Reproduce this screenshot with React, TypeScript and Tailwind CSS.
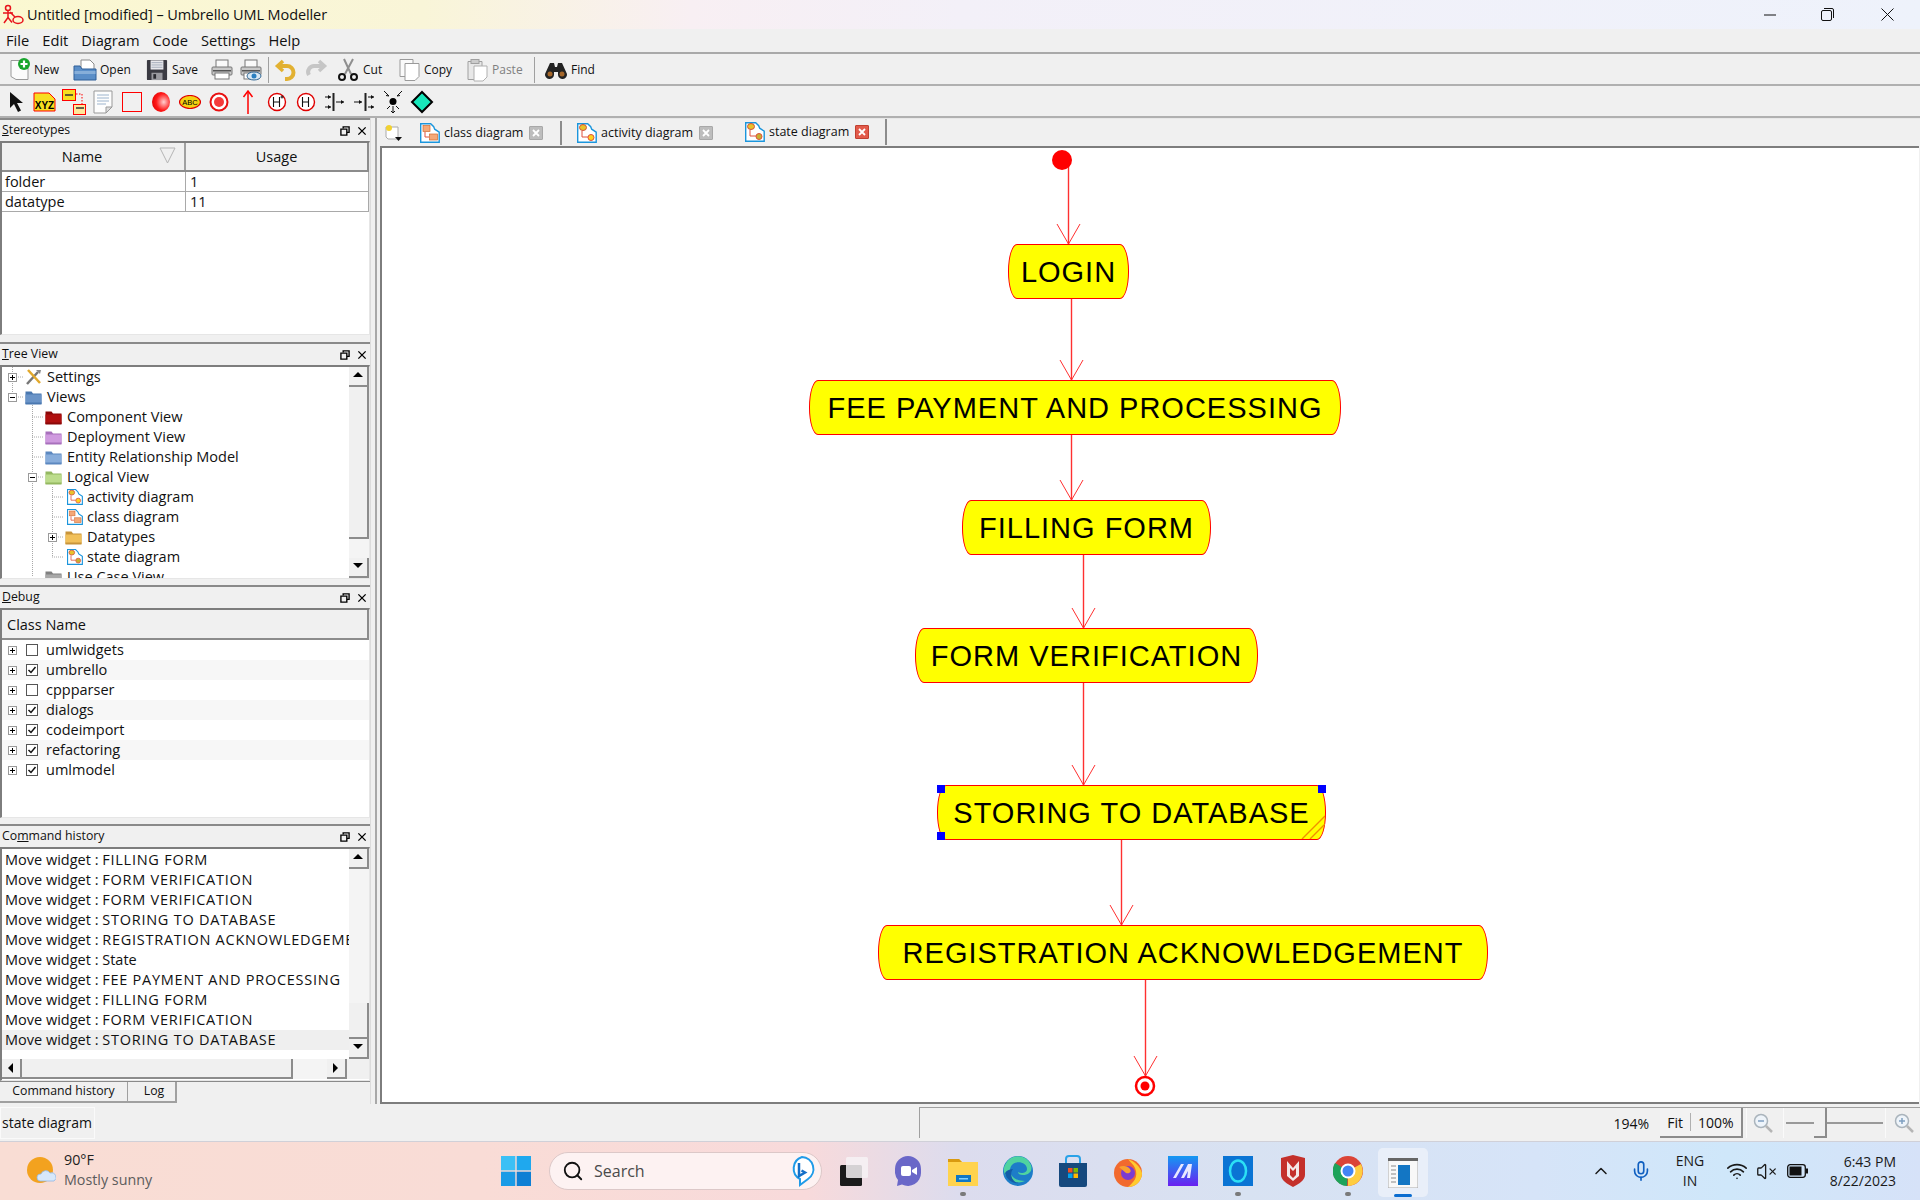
import type { ReactNode } from "react";
import { ChevronUp, Mic, Search, VolumeX, Wifi } from "lucide-react";

const menu = ["File", "Edit", "Diagram", "Code", "Settings", "Help"];

const historyRows = [
  "FILLING FORM",
  "FORM VERIFICATION",
  "FORM VERIFICATION",
  "STORING TO DATABASE",
  "REGISTRATION ACKNOWLEDGEMENT",
  "State",
  "FEE PAYMENT AND PROCESSING",
  "FILLING FORM",
  "FORM VERIFICATION",
  "STORING TO DATABASE",
];

const debugRows = [
  { name: "umlwidgets", on: false },
  { name: "umbrello", on: true },
  { name: "cppparser", on: false },
  { name: "dialogs", on: true },
  { name: "codeimport", on: true },
  { name: "refactoring", on: true },
  { name: "umlmodel", on: true },
];

function Folder({ color, dark }: { color: string; dark: string }) {
  return (
    <svg width="17" height="16" viewBox="0 0 17 16">
      <path d="M0.5 2.5h6l1.5 2h8.500v10h-16z" fill={dark} />
      <rect x="0.5" y="5.500" width="16" height="9.500" fill={color} />
      <rect x="0.5" y="13.500" width="16" height="2" fill={dark} />
    </svg>
  );
}

function DiagramIcon({ variant = "state" }: { variant?: "class" | "activity" | "state" }) {
  return (
    <svg width="20" height="20" viewBox="0 0 20 20">
      <path d="M0.700 0.700h10l3 3 1 2.500 4.500 3v10h-18.500z" fill="#fff" stroke="#1b95dc" strokeWidth="1.400" />
      {variant === "class" ? (
        <>
          <rect x="3" y="2.500" width="7" height="6" fill="#f4a878" stroke="#d06a30" strokeWidth="0.700" />
          <rect x="9.500" y="11" width="8" height="6" fill="#f4a878" stroke="#d06a30" strokeWidth="0.700" />
          <path d="M5 9v5h4" fill="none" stroke="#e0503c" />
        </>
      ) : (
        <>
          <ellipse cx="6" cy="4.500" rx="3.500" ry="3" fill="#e8c22a" stroke="#d0503c" />
          <circle cx="14" cy="14.500" r="3" fill={variant === "activity" ? "#ffd21f" : "#c8b030"} stroke="#e0503c" />
          <path d="M5 8v6h6" fill="none" stroke="#e0503c" />
        </>
      )}
    </svg>
  );
}

function Expander({ open }: { open?: boolean }) {
  return (
    <span className="relative block h-[9px] w-[9px] border border-[#9a9a9a] bg-white">
      <span className="absolute left-[1px] top-[3px] h-px w-[5px] bg-black" />
      {open ? null : <span className="absolute left-[3px] top-[1px] h-[5px] w-px bg-black" />}
    </span>
  );
}

function TreeRow({ indent, expander, icon, label }: { indent: string; expander?: "open" | "closed"; icon: ReactNode; label: string }) {
  return (
    <div className={`flex h-5 shrink-0 items-center ${indent}`}>
      <span className="flex w-[22px] shrink-0 items-center pl-[5px]">
        {expander ? <Expander open={expander === "open"} /> : null}
      </span>
      <span className="flex w-[22px] shrink-0 items-center">{icon}</span>
      <span className="whitespace-nowrap">{label}</span>
    </div>
  );
}

function Arrow({ dir }: { dir: "up" | "down" | "left" | "right" }) {
  const points = { up: "0,6 5,1 10,6", down: "0,1 5,6 10,1", left: "7,0 7,10 2,5", right: "2,0 2,10 7,5" }[dir];
  return (
    <svg width="10" height="10" viewBox="0 0 10 10" className="block">
      <polygon points={points} fill="#000" />
    </svg>
  );
}

function ScrollButton({ dir }: { dir: "up" | "down" | "left" | "right" }) {
  return (
    <div className="flex h-[20px] w-[20px] shrink-0 items-center justify-center border-b-2 border-r-2 border-[#8c8c8c] bg-[#f0f0f0]">
      <Arrow dir={dir} />
    </div>
  );
}

function Dock({ title, h, pad, children }: { title: ReactNode; h: string; pad: string; children: ReactNode }) {
  return (
    <section className={`flex shrink-0 flex-col border-t-2 border-[#8a8a8a] ${h} ${pad}`}>
      <div className="flex h-[21px] shrink-0 items-center justify-between pl-[2px] pr-[3px] text-[12.300px]">
        <span>{title}</span>
        <span className="flex items-center gap-[7px]">
          <svg width="10" height="10" viewBox="0 0 11 11">
            <path d="M3.500 2.500V1h6.500v6H7.500M1 3.500h6.500v6.500H1z" fill="none" stroke="#000" strokeWidth="1.500" />
          </svg>
          <svg width="10" height="10" viewBox="0 0 11 11">
            <path d="M1.500 1.500l8 8M9.500 1.500l-8 8" stroke="#000" strokeWidth="1.500" />
          </svg>
        </span>
      </div>
      {children}
    </section>
  );
}

const frame = "border-l-2 border-t-2 border-b border-r border-l-[#7d7d7d] border-t-[#7d7d7d] border-b-[#e6e6e6] border-r-[#e6e6e6] bg-white";

function Tool({ w, icon, label, muted }: { w: string; icon: ReactNode; label?: string; muted?: boolean }) {
  return (
    <div className={`flex shrink-0 items-center gap-[3px] ${w}`}>
      <span className="flex h-6 w-[24px] shrink-0 items-center justify-center">{icon}</span>
      {label ? <span className={`text-[12px] ${muted ? "text-[#808080]" : ""}`}>{label}</span> : null}
    </div>
  );
}

function PageIcon({ muted }: { muted?: boolean }) {
  return <path d="M4 2.500h12l5 5v14h-12l-5-3z" fill="#fbfbfb" stroke={muted ? "#b5b5b5" : "#9a9a9a"} />;
}

function PrinterIcon() {
  return (
    <>
      <rect x="6" y="2" width="12" height="8" fill="#fafafa" stroke="#777" />
      <rect x="2" y="9" width="20" height="8" rx="1" fill="#c9c9c9" stroke="#777" />
      <rect x="5" y="15" width="14" height="6" fill="#fff" stroke="#777" />
      <rect x="3" y="12" width="18" height="1.500" fill="#555" />
    </>
  );
}

const tools1: { w: string; label?: string; icon: ReactNode; muted?: boolean; sep?: boolean }[] = [
  {
    w: "w-[66px]",
    label: "New",
    icon: (
      <svg width="24" height="24" viewBox="0 0 24 24">
        <PageIcon />
        <circle cx="17" cy="6" r="6" fill="#18a52c" />
        <path d="M17 2.500v7M13.500 6h7" stroke="#fff" strokeWidth="2.200" />
      </svg>
    ),
  },
  {
    w: "w-[72px]",
    label: "Open",
    icon: (
      <svg width="24" height="24" viewBox="0 0 24 24">
        <path d="M8 2h9l4 4v8H8z" fill="#fff" stroke="#8a8a8a" />
        <path d="M1 8h6l2 3h14v11H1z" fill="#5a8ec8" stroke="#2f5f98" />
        <rect x="1.500" y="13" width="21" height="3" fill="#86aed9" />
      </svg>
    ),
  },
  {
    w: "w-[65px]",
    label: "Save",
    icon: (
      <svg width="22" height="24" viewBox="0 0 24 24">
        <rect x="1" y="1" width="22" height="22" rx="1" fill="#3a3a42" />
        <rect x="5" y="1.500" width="14" height="10" fill="#e8e8ec" />
        <path d="M6 4h12M6 6.500h12M6 9h12" stroke="#a0a8b8" />
        <rect x="6" y="15" width="12" height="8" fill="#9a9aa0" />
        <rect x="8" y="16.500" width="3" height="5" fill="#2a2a30" />
      </svg>
    ),
  },
  { w: "w-[29px]", icon: <svg width="24" height="24" viewBox="0 0 24 24"><PrinterIcon /></svg> },
  {
    w: "w-[29px]",
    icon: (
      <svg width="24" height="24" viewBox="0 0 24 24">
        <PrinterIcon />
        <ellipse cx="15" cy="18" rx="7" ry="4" fill="#d8e8f4" stroke="#356a96" />
        <circle cx="15" cy="18" r="2.500" fill="#2a7fc0" />
      </svg>
    ),
  },
  { w: "w-[6px]", icon: null, sep: true },
  {
    w: "w-[30px]",
    icon: (
      <svg width="24" height="24" viewBox="0 0 24 24">
        <path d="M9 3L3.500 8 9 13" fill="none" stroke="#e2b132" strokeWidth="3.500" />
        <path d="M4 8h9a6 6 0 0 1 0 13h-2" fill="none" stroke="#e2b132" strokeWidth="4" />
      </svg>
    ),
  },
  {
    w: "w-[32px]",
    icon: (
      <svg width="24" height="24" viewBox="0 0 24 24">
        <path d="M15 3l5.500 5L15 13" fill="none" stroke="#c6c6c6" strokeWidth="3.500" />
        <path d="M20 8h-9a6 6 0 0 0-6 9" fill="none" stroke="#c6c6c6" strokeWidth="4" />
      </svg>
    ),
  },
  {
    w: "w-[61px]",
    label: "Cut",
    icon: (
      <svg width="24" height="24" viewBox="0 0 24 24">
        <path d="M8 1l7 15M17 1l-8 15" stroke="#8f8f8f" strokeWidth="2" />
        <circle cx="6" cy="19" r="3" fill="none" stroke="#111" strokeWidth="2" />
        <circle cx="18" cy="19" r="3" fill="none" stroke="#111" strokeWidth="2" />
      </svg>
    ),
  },
  {
    w: "w-[68px]",
    label: "Copy",
    icon: (
      <svg width="24" height="24" viewBox="0 0 24 24">
        <path d="M3 1.500h13v17H3z" fill="#fafafa" stroke="#9a9a9a" />
        <path d="M8 5.500h14v13l-4 4H8z" fill="#fff" stroke="#9a9a9a" />
      </svg>
    ),
  },
  {
    w: "w-[69px]",
    label: "Paste",
    muted: true,
    icon: (
      <svg width="24" height="24" viewBox="0 0 24 24">
        <path d="M3 3.500h14v18H3z" fill="#e8e8e8" stroke="#a0a0a0" />
        <rect x="6" y="1.500" width="8" height="4" fill="#ccc" stroke="#a0a0a0" />
        <path d="M9 8h13v11l-4 4H9z" fill="#fff" stroke="#b0b0b0" />
      </svg>
    ),
  },
  { w: "w-[10px]", icon: null, sep: true },
  {
    w: "w-[60px]",
    label: "Find",
    icon: (
      <svg width="24" height="24" viewBox="0 0 24 24">
        <path d="M6 5h4l1 4h2l1-4h4l5 11a4.500 4.500 0 1 1-9 1v-3h-4v3a4.500 4.500 0 1 1-9-1z" fill="#232323" />
        <circle cx="6" cy="16" r="2.500" fill="#a5672a" />
        <circle cx="18" cy="16" r="2.500" fill="#a5672a" />
      </svg>
    ),
  },
];

function Ball() {
  return (
    <svg width="22" height="24" viewBox="0 0 22 24">
      <defs>
        <radialGradient id="ball" cx="0.650" cy="0.500" r="0.700">
          <stop offset="0" stopColor="#ffd0d0" />
          <stop offset="0.600" stopColor="#ff1a1a" />
          <stop offset="1" stopColor="#e00000" />
        </radialGradient>
      </defs>
      <ellipse cx="11" cy="12" rx="9" ry="10" fill="url(#ball)" />
    </svg>
  );
}

function HistoryIcon({ deep }: { deep?: boolean }) {
  return (
    <svg width="20" height="20" viewBox="0 0 20 20">
      <circle cx="10" cy="10" r="8.500" fill="#fff" stroke="#e00000" strokeWidth="1.400" />
      <path d="M6.500 5v10M12.500 5v10M6.500 10h6" stroke="#111" strokeWidth="1.100" fill="none" />
      {deep ? <path d="M15 3.500v3M13.500 5h3" stroke="#111" strokeWidth="1" /> : null}
    </svg>
  );
}

const tools2: ReactNode[] = [
  <svg key="a" width="16" height="22" viewBox="0 0 16 22"><path d="M2 1v16l4-4 4 8 3-1.500-4-7.500h6z" fill="#111" /></svg>,
  <svg key="b" width="23" height="22" viewBox="0 0 23 22"><path d="M1 2h15l6 6v12H1z" fill="#f7df20" stroke="#f00" /><text x="11.500" y="18" fontSize="10" fontWeight="700" textAnchor="middle" fontFamily="Liberation Sans">XYZ</text></svg>,
  <svg key="c" width="24" height="26" viewBox="0 0 24 26">
    <rect x="0.500" y="0.500" width="13" height="11" fill="#f7df20" stroke="#f00" />
    <rect x="11.500" y="15.500" width="12" height="10" fill="#ffe79a" stroke="#f00" />
    <path d="M14 5h6v10" fill="none" stroke="#f00" strokeDasharray="1.500 1.500" />
    <path d="M3 6h8M14 19h8" stroke="#333" strokeWidth="1.500" />
  </svg>,
  <svg key="d" width="20" height="24" viewBox="0 0 20 24"><path d="M1 1h18v16l-6 6H1z" fill="#fdfdfd" stroke="#999" /><path d="M4 5h12M4 8h12M4 11h12M4 14h9" stroke="#9db4cd" /><path d="M13 23v-6h6z" fill="#ddd" stroke="#999" /></svg>,
  <div key="e" className="h-[20px] w-[20px] border border-[#ff0000]" />,
  <Ball key="f" />,
  <svg key="g" width="22" height="14" viewBox="0 0 22 14"><ellipse cx="11" cy="7" rx="10.500" ry="6.500" fill="#f5d210" stroke="#e00000" strokeWidth="1.200" /><text x="11" y="10" fontSize="7.500" textAnchor="middle" fontFamily="Liberation Sans">ABC</text></svg>,
  <svg key="h" width="20" height="20" viewBox="0 0 20 20"><circle cx="10" cy="10" r="8.500" fill="#fff" stroke="#e81010" strokeWidth="2" /><circle cx="10" cy="10" r="5" fill="#f53a3a" /></svg>,
  <svg key="i" width="12" height="24" viewBox="0 0 12 24"><path d="M6 1v23" stroke="#f00" strokeWidth="1.500" /><path d="M1.500 7L6 1l4.500 6" fill="none" stroke="#f00" strokeWidth="1.500" /></svg>,
  <HistoryIcon key="j" deep />,
  <HistoryIcon key="k" />,
  <svg key="l" width="22" height="20" viewBox="0 0 22 20"><path d="M9.500 1v18" stroke="#222" strokeWidth="2" /><path d="M1 5h6M1 15h6M12 10h8" stroke="#111" /><path d="M4 3l3 2-3 2M4 13l3 2-3 2M17 8l3 2-3 2" fill="#111" /></svg>,
  <svg key="m" width="22" height="20" viewBox="0 0 22 20"><path d="M12.500 1v18" stroke="#222" strokeWidth="2" /><path d="M1 10h8M15 5h6M15 15h6" stroke="#111" /><path d="M6 8l3 2-3 2M18 3l3 2-3 2M18 13l3 2-3 2" fill="#111" /></svg>,
  <svg key="n" width="20" height="24" viewBox="0 0 20 24"><circle cx="10" cy="11.500" r="3.500" fill="#000" /><path d="M1 1l5 5M19 1l-5 5M4 19l3-3M16 19l-3-3M10 16v7" stroke="#111" /><path d="M6 6l-3-.5M14 6l3-.5M8 21l2 2 2-2" stroke="#111" fill="none" /></svg>,
  <svg key="o" width="24" height="24" viewBox="0 0 24 24"><path d="M12 2l10 10-10 10L2 12z" fill="#17e8bb" stroke="#000" strokeWidth="2" /></svg>,
];

const nodes = [
  { label: "LOGIN", cls: "left-[626px] top-[96px] w-[121px]" },
  { label: "FEE PAYMENT AND PROCESSING", cls: "left-[427px] top-[232px] w-[532px]" },
  { label: "FILLING FORM", cls: "left-[580px] top-[352px] w-[249px]" },
  { label: "FORM VERIFICATION", cls: "left-[533px] top-[480px] w-[343px]" },
  { label: "STORING TO DATABASE", cls: "left-[555px] top-[637px] w-[389px]", selected: true },
  { label: "REGISTRATION ACKNOWLEDGEMENT", cls: "left-[496px] top-[777px] w-[610px]" },
];

const edges = [
  [1068, 165, 244],
  [1071, 299, 380],
  [1071, 435, 500],
  [1083, 555, 628],
  [1083, 683, 785],
  [1121, 840, 925],
  [1145, 980, 1076],
];

function Canvas() {
  return (
    <div className="relative min-h-0 flex-1 overflow-hidden bg-white">
      <svg className="absolute left-0 top-0 h-[954px] w-[1536px]" viewBox="382 148 1536 954">
        {edges.map(([x, y1, y2]) => (
          <g key={y1} stroke="#ff3030" strokeWidth="1" fill="none">
            <path d={`M${x + 0.5} ${y1}V${y2}`} strokeWidth="1.400" />
            <path d={`M${x - 11} ${y2 - 20}L${x + 0.5} ${y2}L${x + 12} ${y2 - 20}`} />
          </g>
        ))}
        <circle cx="1062" cy="160" r="10" fill="#ff0000" />
        <circle cx="1145" cy="1086" r="9" fill="#fff" stroke="#ff0000" strokeWidth="2.500" />
        <circle cx="1145" cy="1086" r="4.500" fill="#ff0000" />
      </svg>
      {nodes.map((n) => (
        <div
          key={n.label}
          className={`absolute flex h-[55px] items-center justify-center rounded-[9px/27px] border border-[#ff0000] bg-[#ffff00] pt-[2px] font-['Liberation_Sans',sans-serif] text-[29px] tracking-[1px] text-black ${n.cls}`}
        >
          <span className="whitespace-nowrap">{n.label}</span>
          {n.selected ? (
            <>
              <span className="absolute -left-px -top-px h-2 w-2 bg-[#0000ff]" />
              <span className="absolute -right-px -top-px h-2 w-2 bg-[#0000ff]" />
              <span className="absolute -bottom-px -left-px h-2 w-2 bg-[#0000ff]" />
              <svg className="absolute bottom-0 right-0" width="24" height="24" viewBox="0 0 24 24">
                <path d="M1 24L24 1M9 24L24 9" stroke="#f09000" strokeWidth="1.400" />
              </svg>
            </>
          ) : null}
        </div>
      ))}
    </div>
  );
}

function Tab({ w, pad, variant, label, active }: { w: string; pad: string; variant: "class" | "activity" | "state"; label: string; active?: boolean }) {
  return (
    <div
      className={`flex shrink-0 items-center gap-[4px] text-[12.500px] ${w} ${pad} ${
        active ? "h-[26px] self-start border-r-2 border-[#8c8c8c] bg-[#f0f0f0]" : "mb-[1px] h-[24px] self-end"
      }`}
    >
      <DiagramIcon variant={variant} />
      <span className="whitespace-nowrap">{label}</span>
      <span
        className={`ml-[2px] flex h-[14px] w-[14px] items-center justify-center rounded-[1px] ${
          active ? "border border-[#c04030] bg-[#e25a4a]" : "border border-[#a8a8a8] bg-[#bdbdbd]"
        }`}
      >
        <svg width="8" height="8" viewBox="0 0 8 8">
          <path d="M1 1l6 6M7 1L1 7" stroke="#fff" strokeWidth="1.800" />
        </svg>
      </span>
    </div>
  );
}

function TaskIcon({ children, w = "w-[55px]", dot }: { children: ReactNode; w?: string; dot?: boolean }) {
  return (
    <div className={`relative flex h-full shrink-0 items-center justify-center ${w}`}>
      {children}
      {dot ? <span className="absolute bottom-[4px] h-[4px] w-[6px] rounded-full bg-[#7a7a7a]" /> : null}
    </div>
  );
}

function Taskbar() {
  return (
    <footer className="flex h-[59px] shrink-0 items-center border-t border-[#d0d0d8] bg-[linear-gradient(90deg,#f9ddd4_0%,#f9dcd6_25%,#f8dadb_42%,#dcdcee_50%,#d8e2f2_65%,#d6e4f8_80%,#cfe7fa_90%,#d6e2f8_100%)]">
      <div className="flex w-[490px] shrink-0 items-center pb-[2px] pl-[27px]">
        <svg width="29" height="27" viewBox="0 0 29 27">
          <circle cx="13" cy="13" r="13" fill="#f3a21f" />
          <path d="M13 24a3.500 3.500 0 0 1 1-7 5 5 0 0 1 9-1 4.500 4.500 0 0 1 4 8z" fill="#d7e8fb" stroke="#8fb7e6" strokeWidth="0.800" />
        </svg>
        <div className="ml-[8px] text-[14.300px] leading-[20px]">
          <div className="text-[#222]">90°F</div>
          <div className="text-[#5c5c5c]">Mostly sunny</div>
        </div>
      </div>
      <div className="flex w-[59px] justify-center pr-[7px]">
        <svg width="30" height="30" viewBox="0 0 30 30">
          <rect x="0" y="0" width="14.300" height="14.300" fill="#3cc0f5" />
          <rect x="15.700" y="0" width="14.300" height="14.300" fill="#1fa8ee" />
          <rect x="0" y="15.700" width="14.300" height="14.300" fill="#1a9be6" />
          <rect x="15.700" y="15.700" width="14.300" height="14.300" fill="#0e7fd4" />
        </svg>
      </div>
      <div className="flex h-[38px] w-[273px] shrink-0 items-center rounded-full border border-[#dcc8c8] bg-[#fdf2f2] pl-[12px] pr-[5px] text-[16px] text-[#4a4a4a]">
        <Search size={22} strokeWidth={2} className="text-[#111]" />
        <span className="ml-[10px] flex-1">Search</span>
        <svg width="28" height="32" viewBox="0 0 28 32">
          <path d="M14 2a12 12 0 0 1 6 22l-8 6v-6A12 12 0 0 1 14 2z" fill="#fff" stroke="#1f9be8" strokeWidth="2" />
          <path d="M11 8v13l6-3.500-3.500-2" fill="none" stroke="#1470c8" strokeWidth="2.500" />
        </svg>
      </div>
      <div className="ml-[3px] flex h-full items-stretch">
        <TaskIcon>
          <svg width="32" height="30" viewBox="0 0 32 30">
            <rect x="3" y="9" width="22" height="21" rx="1.500" fill="#1b1b1b" />
            <rect x="9" y="1" width="22" height="21" rx="1.500" fill="#f6f2f4" fillOpacity="0.850" />
          </svg>
        </TaskIcon>
        <TaskIcon>
          <svg width="30" height="32" viewBox="0 0 30 32">
            <path d="M15 1a13 13 0 0 1 13 13v4a13 13 0 0 1-19 11.500L4 31l1-6a13 13 0 0 1-3-7v-4A13 13 0 0 1 15 1z" fill="#6a67c8" />
            <rect x="8" y="11" width="10" height="10" rx="2" fill="#fff" />
            <path d="M19 15l5-3v8l-5-3z" fill="#fff" />
          </svg>
        </TaskIcon>
        <TaskIcon dot>
          <svg width="30" height="30" viewBox="0 0 30 30">
            <path d="M0 3h11l3 3h16v24H0z" fill="#ffd34e" />
            <path d="M0 3h11l3 3H0z" fill="#d99a10" />
            <rect x="8" y="19" width="15" height="7" fill="#0f77c4" />
            <rect x="11" y="22" width="9" height="1.500" fill="#7fd0ff" />
          </svg>
        </TaskIcon>
        <TaskIcon>
          <svg width="30" height="30" viewBox="0 0 30 30">
            <circle cx="15" cy="15" r="15" fill="#1d7dc8" />
            <path d="M2 9a14 14 0 0 1 26 0c2 6-2 10-8 10-3 0-5-1-5-3 3 2 9 1 9-3 0-6-9-9-14-5-4 3-4 9 0 13 3 3 8 4 12 4a15 15 0 0 1-21-9c-.500-3 0-5 1-7z" fill="#4fd3a0" />
            <path d="M10 13c-4 5-1 13 6 14-7 1-13-4-14-10 2-3 5-4 8-4z" fill="#135ca8" />
          </svg>
        </TaskIcon>
        <TaskIcon>
          <svg width="30" height="32" viewBox="0 0 30 32">
            <path d="M8 9V4a3 3 0 0 1 3-3h8a3 3 0 0 1 3 3v5" fill="none" stroke="#2aa2e8" strokeWidth="2" />
            <path d="M1 8h28v22a2 2 0 0 1-2 2H3a2 2 0 0 1-2-2z" fill="#16497e" />
            <rect x="10" y="13" width="4.500" height="4.500" fill="#f25022" />
            <rect x="15.500" y="13" width="4.500" height="4.500" fill="#7fba00" />
            <rect x="10" y="18.500" width="4.500" height="4.500" fill="#00a4ef" />
            <rect x="15.500" y="18.500" width="4.500" height="4.500" fill="#ffb900" />
          </svg>
        </TaskIcon>
        <TaskIcon>
          <svg width="30" height="32" viewBox="0 0 30 32">
            <circle cx="15" cy="18" r="14" fill="#f26a2e" />
            <path d="M15 4c6 2 12 7 14 14a14 14 0 0 1-14 14C20 28 26 22 22 13c-1-3-5-6-7-9z" fill="#ffcb2e" />
            <circle cx="15" cy="18" r="7" fill="#7c3bd0" />
            <path d="M6 12c4-2 9-1 11 2s-1 5-4 4" fill="#f9a12e" />
          </svg>
        </TaskIcon>
        <TaskIcon>
          <svg width="30" height="30" viewBox="0 0 30 30">
            <defs>
              <linearGradient id="mm" x1="0" y1="0" x2="0" y2="1">
                <stop offset="0" stopColor="#1499f2" />
                <stop offset="1" stopColor="#6a20f0" />
              </linearGradient>
            </defs>
            <rect width="30" height="30" fill="url(#mm)" />
            <path d="M5 22L13 8h3L8 22zM13 22l7-14h4l-2 14h-3l1-7-4 7z" fill="#e8e8ff" />
          </svg>
        </TaskIcon>
        <TaskIcon dot>
          <svg width="30" height="30" viewBox="0 0 30 30">
            <rect width="30" height="30" fill="#0a74d4" />
            <ellipse cx="15" cy="15" rx="8" ry="10.500" fill="none" stroke="#2ce0f5" strokeWidth="2.500" />
          </svg>
        </TaskIcon>
        <TaskIcon>
          <svg width="26" height="32" viewBox="0 0 26 32">
            <path d="M1 3l12-3 12 3v17c0 5-6 9-12 12C7 29 1 25 1 20z" fill="#c4302b" />
            <path d="M7 6l6 7 6-7v15l-6 5-6-5z" fill="#f4e8e8" />
            <path d="M10 13l3 3 3-3v7l-3 3-3-3z" fill="#c4302b" />
          </svg>
        </TaskIcon>
        <TaskIcon dot>
          <svg width="30" height="30" viewBox="0 0 30 30">
            <circle cx="15" cy="15" r="15" fill="#db4437" />
            <path d="M15 15L28 8a15 15 0 0 1-13 22z" fill="#ffcd40" />
            <path d="M15 15l-1 15A15 15 0 0 1 2 7z" fill="#1da35a" />
            <circle cx="15" cy="15" r="7.500" fill="#fff" />
            <circle cx="15" cy="15" r="5.500" fill="#4285f4" />
          </svg>
        </TaskIcon>
        <div className="relative mb-[3px] ml-[3px] mt-[6px] flex w-[50px] shrink-0 items-center justify-center self-stretch rounded-[5px] bg-[#e9eff9]">
          <svg width="30" height="30" viewBox="0 0 30 30">
            <rect width="30" height="30" fill="#f8f8f8" stroke="#aaa" />
            <rect width="30" height="3" fill="#666" />
            <path d="M3 8h5M3 12h5M3 16h5M3 20h5M3 24h5" stroke="#888" />
            <rect x="10" y="7" width="12" height="20" fill="#1376c4" />
          </svg>
          <span className="absolute bottom-0 h-[3px] w-[18px] rounded-full bg-[#0a6cd0]" />
        </div>
      </div>
      <div className="ml-auto flex items-center pr-[24px] text-[#1a1a1a]">
        <ChevronUp size={20} strokeWidth={1.800} />
        <Mic size={22} strokeWidth={1.800} className="ml-[19px] text-[#0f5fc0]" />
        <div className="ml-[16px] w-[44px] text-center text-[14px] leading-[20px]">
          ENG
          <br />
          IN
        </div>
        <Wifi size={22} strokeWidth={1.800} className="ml-[14px]" />
        <VolumeX size={21} strokeWidth={1.500} className="ml-[8px]" />
        <svg className="ml-[10px]" width="21" height="14" viewBox="0 0 21 14">
          <rect x="0.700" y="0.700" width="17.600" height="12.600" rx="2.500" fill="none" stroke="#111" strokeWidth="1.300" />
          <rect x="2.500" y="2.500" width="12" height="9" fill="#111" />
          <rect x="19" y="4.500" width="2" height="5" fill="#111" />
        </svg>
        <div className="ml-[4px] w-[84px] text-right text-[14px] leading-[19px]">
          <div>6:43 PM</div>
          <div>8/22/2023</div>
        </div>
      </div>
    </footer>
  );
}

export default function App() {
  return (
    <div className="flex h-[1200px] w-[1920px] flex-col overflow-hidden bg-[#f0f0f0] font-['Open_Sans',sans-serif] text-[14.500px] text-[#111]">
      <header className="flex h-[29px] shrink-0 items-center bg-[linear-gradient(90deg,#fbf8d1_0%,#f9f5d8_22%,#f8eff3_36%,#f3f0f8_50%,#eef2fb_100%)]">
        <svg className="ml-[2px] shrink-0" width="22" height="22" viewBox="0 0 22 22">
          <g fill="none" stroke="#e8141c" strokeWidth="1.500">
            <circle cx="6" cy="4" r="2.500" />
            <path d="M6 6.500v7M1 9h10M6 13.500L2 19M6 13.500l4 5" />
            <ellipse cx="16" cy="16" rx="5" ry="3.500" />
            <path d="M8 8l5 5" />
          </g>
        </svg>
        <span className="ml-[3px] text-[14.500px] tracking-[-0.1px]">Untitled [modified] – Umbrello UML Modeller</span>
        <div className="ml-auto flex items-center">
          <svg className="mr-[45px]" width="12" height="12" viewBox="0 0 12 12"><path d="M0 6h12" stroke="#111" /></svg>
          <svg className="mr-[47px]" width="13" height="13" viewBox="0 0 13 13"><rect x="0.500" y="2.500" width="10" height="10" rx="1.500" fill="none" stroke="#111" /><path d="M3 .5h8a1.500 1.500 0 0 1 1.500 1.500v8" fill="none" stroke="#111" /></svg>
          <svg className="mr-[26px]" width="13" height="13" viewBox="0 0 13 13"><path d="M.5.5l12 12M12.500.5l-12 12" stroke="#111" /></svg>
        </div>
      </header>
      <nav className="flex h-[25px] shrink-0 items-center gap-[13px] border-b-2 border-[#a9a9a9] pl-[6px] text-[14.700px]">
        {menu.map((m) => (
          <span key={m}>{m}</span>
        ))}
      </nav>
      <div className="flex h-[32px] shrink-0 items-center border-b-2 border-[#b0b0b0] pl-[7px] pt-[2px]">
        {tools1.map((t, i) =>
          t.sep ? (
            <div key={i} className={`h-[26px] shrink-0 ${t.w}`}>
              <div className="h-full w-px bg-[#a0a0a0]" />
            </div>
          ) : (
            <Tool key={i} w={t.w} icon={t.icon} label={t.label} muted={t.muted} />
          ),
        )}
      </div>
      <div className="flex h-[32px] shrink-0 items-center border-b-2 border-[#b0b0b0] pl-[1px] pt-[2px]">
        {tools2.map((icon, i) => (
          <div key={i} className="flex w-[29px] shrink-0 items-center justify-center">
            {icon}
          </div>
        ))}
      </div>

      <main className="flex min-h-0 flex-1">
        <aside className="flex w-[371px] shrink-0 flex-col border-r border-[#dcdcdc]">
          <Dock h="h-[224px]" pad="pb-[7px]" title={<><u>S</u>tereotypes</>}>
            <div className={`flex-1 ${frame}`}>
              <div className="grid h-[29px] grid-cols-[184px_1fr] border-b-2 border-[#8c8c8c] bg-[#f0f0f0]">
                <div className="relative flex items-center justify-center border-r-2 border-[#a0a0a0] pr-[22px]">
                  <span>Name</span>
                  <svg className="absolute right-[8px] top-[4px]" width="17" height="17" viewBox="0 0 17 17">
                    <path d="M1 1h15l-7.500 15z" fill="none" stroke="#b5b5b5" />
                  </svg>
                </div>
                <div className="flex items-center justify-center border-r-2 border-[#8c8c8c]">Usage</div>
              </div>
              {[["folder", "1"], ["datatype", "11"]].map(([a, b]) => (
                <div key={a} className="grid h-5 grid-cols-[184px_1fr] border-b border-[#a9a9a9] leading-[19px]">
                  <div className="border-r border-[#a9a9a9] pl-[3px]">{a}</div>
                  <div className="border-r border-[#a9a9a9] pl-[4px]">{b}</div>
                </div>
              ))}
            </div>
          </Dock>

          <Dock h="h-[243px]" pad="pb-[6px]" title={<><u>T</u>ree View</>}>
            <div className={`relative flex min-h-0 flex-1 overflow-hidden ${frame}`}>
              <svg className="absolute left-0 top-0 h-[210px] w-[120px]" viewBox="0 0 120 210">
                <path d="M10.500 0V34M30.500 30V210M50.500 120V190M14 10h8M14 30h8M30 50h12M30 70h12M30 90h12M34 110h8M50 130h12M50 150h12M54 170h8M50 190h12" stroke="#a8a8a8" strokeDasharray="1 1" fill="none" />
              </svg>
              <div className="relative flex min-w-0 flex-1 flex-col overflow-hidden">
                <TreeRow indent="pl-[1px]" expander="closed" label="Settings" icon={
                  <svg width="18" height="18" viewBox="0 0 18 18"><path d="M2 16L13 4" stroke="#777" strokeWidth="2.500" /><path d="M3 2l12 13" stroke="#e2a92c" strokeWidth="2.500" /><path d="M11 2l5 0-1 4" fill="#888" /></svg>
                } />
                <TreeRow indent="pl-[1px]" expander="open" label="Views" icon={<Folder color="#6a94c8" dark="#4a78b0" />} />
                <TreeRow indent="pl-[21px]" label="Component View" icon={<Folder color="#b01010" dark="#8a0808" />} />
                <TreeRow indent="pl-[21px]" label="Deployment View" icon={<Folder color="#cf9adf" dark="#a870bc" />} />
                <TreeRow indent="pl-[21px]" label="Entity Relationship Model" icon={<Folder color="#88addb" dark="#5c88c0" />} />
                <TreeRow indent="pl-[21px]" expander="open" label="Logical View" icon={<Folder color="#bcdc8c" dark="#94b860" />} />
                <TreeRow indent="pl-[41px]" label="activity diagram" icon={<span className="scale-[0.8]"><DiagramIcon variant="activity" /></span>} />
                <TreeRow indent="pl-[41px]" label="class diagram" icon={<span className="scale-[0.8]"><DiagramIcon variant="class" /></span>} />
                <TreeRow indent="pl-[41px]" expander="closed" label="Datatypes" icon={<Folder color="#f1c05a" dark="#c8943a" />} />
                <TreeRow indent="pl-[41px]" label="state diagram" icon={<span className="scale-[0.8]"><DiagramIcon variant="state" /></span>} />
                <TreeRow indent="pl-[21px]" label="Use Case View" icon={<Folder color="#a8a8a8" dark="#808080" />} />
              </div>
              <div className="relative flex w-[20px] shrink-0 flex-col">
                <ScrollButton dir="up" />
                <div className="h-[152px] shrink-0 border-b-2 border-r-2 border-[#8c8c8c] bg-[#f0f0f0]" />
                <div className="flex-1 bg-[#f4f4f4]" />
                <ScrollButton dir="down" />
              </div>
            </div>
          </Dock>

          <Dock h="h-[239px]" pad="pb-[6px]" title={<><u>D</u>ebug</>}>
            <div className={`flex-1 ${frame}`}>
              <div className="flex h-[30px] items-center border-b-2 border-r-2 border-[#8c8c8c] bg-[#f0f0f0] pl-[5px] pt-[1px]">Class Name</div>
              <div>
                {debugRows.map((r, i) => (
                  <div key={r.name} className={`flex h-5 items-center pl-[6px] ${i % 2 === 1 ? "bg-[#f7f7f7]" : ""}`}>
                    <Expander />
                    <span className="ml-[9px] flex h-[12px] w-[12px] items-center justify-center border border-[#555] bg-white">
                      {r.on ? (
                        <svg width="10" height="10" viewBox="0 0 10 10">
                          <path d="M1.500 5l2.500 2.500L8.500 2" fill="none" stroke="#111" strokeWidth="1.500" />
                        </svg>
                      ) : null}
                    </span>
                    <span className="ml-[8px]">{r.name}</span>
                  </div>
                ))}
              </div>
            </div>
          </Dock>

          <Dock h="h-[280px]" pad="" title={<>Co<u>m</u>mand history</>}>
            <div className={`flex h-[234px] shrink-0 flex-col ${frame}`}>
              <div className="flex h-[210px] shrink-0">
                <div className="min-w-0 flex-1 overflow-hidden pt-[1px]">
                  {historyRows.map((r, i) => (
                    <div key={i} className={`h-5 overflow-hidden whitespace-nowrap pl-[3px] leading-5 ${i === 9 ? "bg-[#efefef]" : ""}`}>
                      Move widget : <span className={r === "State" ? "" : "tracking-[0.75px]"}>{r}</span>
                    </div>
                  ))}
                </div>
                <div className="flex w-[20px] shrink-0 flex-col">
                  <ScrollButton dir="up" />
                  <div className="flex-1 bg-[#f4f4f4]" />
                  <div className="h-[36px] shrink-0 border-b-2 border-r-2 border-[#8c8c8c] bg-[#f0f0f0]" />
                  <ScrollButton dir="down" />
                </div>
              </div>
              <div className="flex h-5 shrink-0">
                <ScrollButton dir="left" />
                <div className="w-[271px] shrink-0 border-b-2 border-r-2 border-[#8c8c8c] bg-[#f0f0f0]" />
                <div className="w-[34px] shrink-0 bg-[#f4f4f4]" />
                <ScrollButton dir="right" />
                <div className="flex-1 bg-[#f0f0f0]" />
              </div>
            </div>
            <div className="flex h-[22px] shrink-0 border-t border-[#8a8a8a] text-[12.300px]">
              <div className="flex h-[21px] w-[128px] items-center justify-center border-b-2 border-r border-[#a0a0a0]">Command history</div>
              <div className="flex h-[21px] w-[49px] items-center justify-center border-b-2 border-r-2 border-[#a0a0a0] pl-[5px]">Log</div>
            </div>
          </Dock>
        </aside>

        <div className="w-[9px] shrink-0">
          <div className="h-full w-[6px] border-r-2 border-[#a8a8a8]" />
        </div>

        <div className="flex min-w-0 flex-1 flex-col">
          <div className="flex h-[28px] shrink-0 border-t border-[#e8e8e8]">
            <div className="flex w-[28px] shrink-0 items-center justify-center">
              <svg width="18" height="18" viewBox="0 0 18 18">
                <path d="M1 3h12v12H3l-2-2z" fill="#fff" stroke="#aaa" />
                <circle cx="4" cy="4" r="3" fill="#f2d230" />
                <path d="M10 13h7l-3.500 4z" fill="#111" />
              </svg>
            </div>
            <div className="flex shrink-0">
              <Tab w="w-[154px]" pad="border-r-2 border-[#8c8c8c] pl-[12px]" variant="class" label="class diagram" />
              <Tab w="w-[170px]" pad="pl-[15px]" variant="activity" label="activity diagram" />
              <Tab w="w-[155px]" pad="pl-[13px]" variant="state" label="state diagram" active />
            </div>
          </div>
          <div className="mr-[1px] flex min-h-0 flex-1 flex-col border-b-2 border-l-2 border-t-2 border-[#7d7d7d]">
            <Canvas />
          </div>
        </div>
      </main>

      <div className="flex h-[37px] shrink-0 items-center text-[14px]">
        <div className="flex h-[32px] w-[95px] shrink-0 items-center whitespace-nowrap border border-[#fafafa] pl-[1px]">state diagram</div>
        <div className="ml-[824px] flex h-[31px] flex-1 items-center border-l border-t border-[#a0a0a0] pr-[1px]">
          <span className="ml-auto">194%</span>
          <div className="ml-[11px] flex h-[30px] w-[83px] items-center justify-center border-b-2 border-r-2 border-[#8c8c8c] bg-[#f2f2f2]">
            <span className="pr-[7px]">Fit</span>
            <span className="h-[18px] w-px bg-[#b0b0b0]" />
            <span className="pl-[7px]">100%</span>
          </div>
          <div className="ml-[3px] flex h-[30px] w-[33px] items-center justify-center border-l border-[#fafafa]">
            <svg width="20" height="20" viewBox="0 0 20 20">
              <circle cx="8" cy="8" r="6.500" fill="#eef4fa" stroke="#aab4bc" strokeWidth="1.500" />
              <path d="M5 8h6" stroke="#7f9fc0" strokeWidth="1.500" />
              <path d="M13 13l6 6" stroke="#b5b5b5" strokeWidth="2.500" />
            </svg>
          </div>
          <div className="relative ml-[4px] flex h-[30px] w-[103px] items-center border-x border-[#fafafa] px-[2px]">
            <div className="h-[2px] w-full bg-[#999]" />
            <div className="absolute left-[30px] top-0 h-[30px] w-[13px] border-b-2 border-r-2 border-[#8c8c8c] bg-[#f0f0f0]" />
          </div>
          <div className="ml-[3px] flex h-[30px] w-[30px] items-center justify-center">
            <svg width="20" height="20" viewBox="0 0 20 20">
              <circle cx="8" cy="8" r="6.500" fill="#eef4fa" stroke="#aab4bc" strokeWidth="1.500" />
              <path d="M5 8h6M8 5v6" stroke="#7f9fc0" strokeWidth="1.500" />
              <path d="M13 13l6 6" stroke="#b5b5b5" strokeWidth="2.500" />
            </svg>
          </div>
        </div>
      </div>
      <Taskbar />
    </div>
  );
}
